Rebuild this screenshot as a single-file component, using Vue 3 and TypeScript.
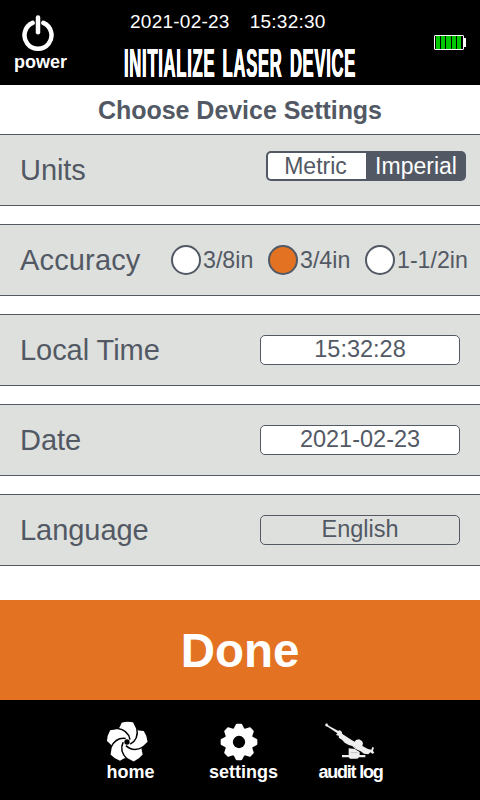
<script setup lang="ts">
import { ref } from 'vue'

const units = ref<'Metric' | 'Imperial'>('Imperial')
const unitOptions = ['Metric', 'Imperial'] as const
const accuracy = ref('3/4in')
const accuracyOptions = ['3/8in', '3/4in', '1-1/2in']
const localTime = ref('15:32:28')
const date = ref('2021-02-23')
const petals = [0, 72, 144, 216, 288]
const teeth = [0, 45, 90, 135, 180, 225, 270, 315]
</script>

<template>
  <div class="screen">
    <header class="topbar">
      <button class="power">
        <svg class="power-icon" width="34" height="38" viewBox="0 0 34 38">
          <path d="M11.6 8.9A13.5 13.5 0 1 0 22.4 8.9" />
          <path d="M17 3.4V18.2" />
        </svg>
        <span>power</span>
      </button>
      <div class="heading">
        <div class="clock"><span>2021-02-23</span><span>15:32:30</span></div>
        <div class="title">INITIALIZE LASER DEVICE</div>
      </div>
      <div class="battery">
        <div class="cells"><i v-for="n in 5" :key="n"></i></div>
        <div class="tip"></div>
      </div>
    </header>

    <h1 class="subtitle">Choose Device Settings</h1>

    <main class="rows">
      <section class="row">
        <label>Units</label>
        <div class="toggle">
          <button v-for="u in unitOptions" :key="u" :class="{ on: units === u }" @click="units = u">{{ u }}</button>
        </div>
      </section>
      <section class="row">
        <label class="wide">Accuracy</label>
        <div class="radios">
          <button v-for="a in accuracyOptions" :key="a" class="radio" @click="accuracy = a">
            <span class="dot" :class="{ on: accuracy === a }"></span>{{ a }}
          </button>
        </div>
      </section>
      <section class="row">
        <label>Local Time</label>
        <div class="field">{{ localTime }}</div>
      </section>
      <section class="row">
        <label>Date</label>
        <div class="field">{{ date }}</div>
      </section>
      <section class="row">
        <label>Language</label>
        <button class="field plain">English</button>
      </section>
    </main>

    <button class="done">Done</button>

    <nav class="bottombar">
      <button class="nav home">
        <svg width="42" height="42" viewBox="-63 -63 126 126">
          <circle class="fill" r="46" />
          <g v-for="p in petals" :key="p" :transform="`rotate(${p})`">
            <path class="fill" d="M0 0L-28 -39L-22 -44L-16 -58Q0 -63 18 -59L25 -45L28 -39Z" />
          </g>
          <g v-for="p in petals" :key="'s' + p" :transform="`rotate(${p})`">
            <path class="gap" d="M-30 -41Q4 -36 9 -7" />
          </g>
          <circle r="8" />
        </svg>
        <span>home</span>
      </button>
      <button class="nav settings">
        <svg width="42" height="42" viewBox="-63 -63 126 126">
          <circle class="fill" r="43" />
          <path v-for="t in teeth" :key="t" class="fill" :transform="`rotate(${t})`" d="M-18 -36L-10 -52Q-9 -55 -6 -55H6Q9 -55 10 -52L18 -36Z" />
          <circle r="18.5" />
        </svg>
        <span>settings</span>
      </button>
      <button class="nav audit">
        <svg width="52" height="42" viewBox="0 0 156 126">
          <path class="fill" d="M4 9L9 7L14 14L42 29L48 28L53 32L55 39L84 58L92 62L96 57L105 55L114 60L117 67L115 75L132 84L142 86L145 78L150 80L147 89L151 96L145 98L139 94L133 100L120 98L110 91L93 83L85 75L74 72L62 65L54 56L45 51L44 44L36 42L40 37L12 18L4 15Z" />
          <path class="fill" d="M74 82L92 84L107 93V102H124V109H105L100 113H78L74 109H54V102H74Z" />
          <path class="detail" d="M80 95H101M90 76L96 81" />
        </svg>
        <span>audit log</span>
      </button>
    </nav>
  </div>
</template>

<style>
body {
  margin: 0;
}
</style>

<style scoped>
.screen {
  width: 480px;
  height: 800px;
  display: flex;
  flex-direction: column;
  background: #fff;
  color: #525964;
  font-family: "Liberation Sans", Arial, sans-serif;
  overflow: hidden;
}
button {
  border: 0;
  padding: 0;
  margin: 0;
  background: none;
  color: inherit;
  font: inherit;
}
.topbar {
  height: 85px;
  flex: none;
  display: flex;
  background: #000;
  color: #fff;
}
.power {
  width: 81px;
  display: flex;
  flex-direction: column;
  align-items: center;
  padding-top: 14px;
  font-size: 18px;
  font-weight: bold;
  line-height: 20px;
}
.power-icon {
  display: block;
  margin-right: 6px;
  fill: none;
  stroke: #fff;
  stroke-width: 4.5;
  stroke-linecap: round;
}
.heading {
  width: 240px;
  flex: none;
  margin-left: 38px;
  padding-top: 11px;
}
.clock {
  display: flex;
  gap: 20px;
  padding-left: 11px;
  font-size: 19px;
  line-height: 21px;
  letter-spacing: 0.25px;
}
.title {
  width: max-content;
  margin: 9px 0 0 5px;
  white-space: nowrap;
  font-size: 41px;
  line-height: 44px;
  font-weight: bold;
  letter-spacing: 1.8px;
  word-spacing: 5px;
  transform: scaleX(0.405);
  transform-origin: left center;
  text-shadow: 0.6px 0 0 #fff, -0.6px 0 0 #fff;
}
.battery {
  margin-left: 75px;
  padding-top: 35px;
  display: flex;
}
.cells {
  box-sizing: border-box;
  width: 30px;
  height: 15px;
  border: 1px solid #fff;
  border-radius: 1px;
  padding: 0 2px 0 1px;
  display: flex;
  gap: 1px;
}
.cells i {
  flex: 1;
  background: #00c800;
}
.tip {
  width: 2px;
  height: 9px;
  margin-top: 3px;
  background: #fff;
}
.subtitle {
  height: 49px;
  flex: none;
  margin: 0;
  text-align: center;
  font-size: 25px;
  line-height: 51px;
  letter-spacing: -0.04px;
}
.rows {
  display: flex;
  flex-direction: column;
  gap: 18px;
}
.row {
  box-sizing: border-box;
  height: 72px;
  display: flex;
  align-items: center;
  justify-content: space-between;
  padding: 0 20px;
  background: #dee0dd;
  border-top: 1px solid #525964;
  border-bottom: 1px solid #525964;
}
.row label {
  font-size: 29px;
  letter-spacing: -0.05px;
}
.row label.wide {
  letter-spacing: 0.15px;
}
.toggle {
  box-sizing: border-box;
  width: 200px;
  height: 30px;
  display: flex;
  margin: 0 -6px 8px 0;
  padding: 2px;
  border-radius: 5px;
  background: #525964;
  color: #fff;
  font-size: 23px;
  line-height: 26px;
}
.toggle button {
  width: 98px;
}
.toggle button:not(.on) {
  box-sizing: border-box;
  padding-right: 3px;
  background: #fff;
  color: #525964;
  border-radius: 3px 0 0 3px;
}
.toggle .on {
  box-sizing: border-box;
  padding-left: 2px;
}
.radios {
  display: flex;
  width: 309px;
  flex: none;
  margin-right: -20px;
  font-size: 23.2px;
  letter-spacing: -0.15px;
}
.radio {
  width: 97px;
  flex: none;
  display: flex;
  align-items: center;
  gap: 2px;
  line-height: 30px;
  white-space: nowrap;
}
.radio:last-child {
  width: 115px;
}
.dot {
  box-sizing: border-box;
  width: 30px;
  height: 30px;
  flex: none;
  border: 2px solid #525964;
  border-radius: 50%;
  background: #fff;
}
.dot.on {
  background: #e37222;
}
.field {
  box-sizing: border-box;
  width: 200px;
  height: 30px;
  padding-bottom: 2px;
  border: 1px solid #525964;
  border-radius: 5px;
  background: #fff;
  text-align: center;
  font-size: 23.5px;
  line-height: 26px;
}
.field.plain {
  background: none;
}
.done {
  height: 100px;
  flex: none;
  margin-top: 34px;
  background: #e37222;
  color: #fff;
  font-size: 47.5px;
  font-weight: bold;
}
.bottombar {
  box-sizing: border-box;
  height: 100px;
  flex: none;
  display: flex;
  justify-content: center;
  padding-right: 5px;
  background: #000;
  color: #fff;
}
.nav {
  display: flex;
  flex-direction: column;
  align-items: center;
  padding-top: 21px;
  font-size: 18px;
  font-weight: bold;
  line-height: 18px;
}
.nav svg {
  display: block;
}
.home {
  width: 100px;
}
.home svg {
  margin-right: 7px;
}
.settings {
  width: 126px;
}
.settings svg {
  margin-right: 9px;
}
.audit {
  width: 88px;
}
.audit svg {
  margin-right: 2px;
}
.audit span {
  letter-spacing: -1.2px;
}
.fill {
  fill: #fff;
}
.gap {
  fill: none;
  stroke: #000;
  stroke-width: 4.5;
}
.audit .fill {
  fill: #eee;
}
.detail {
  fill: none;
  stroke: #aaa;
  stroke-width: 2;
}
</style>
